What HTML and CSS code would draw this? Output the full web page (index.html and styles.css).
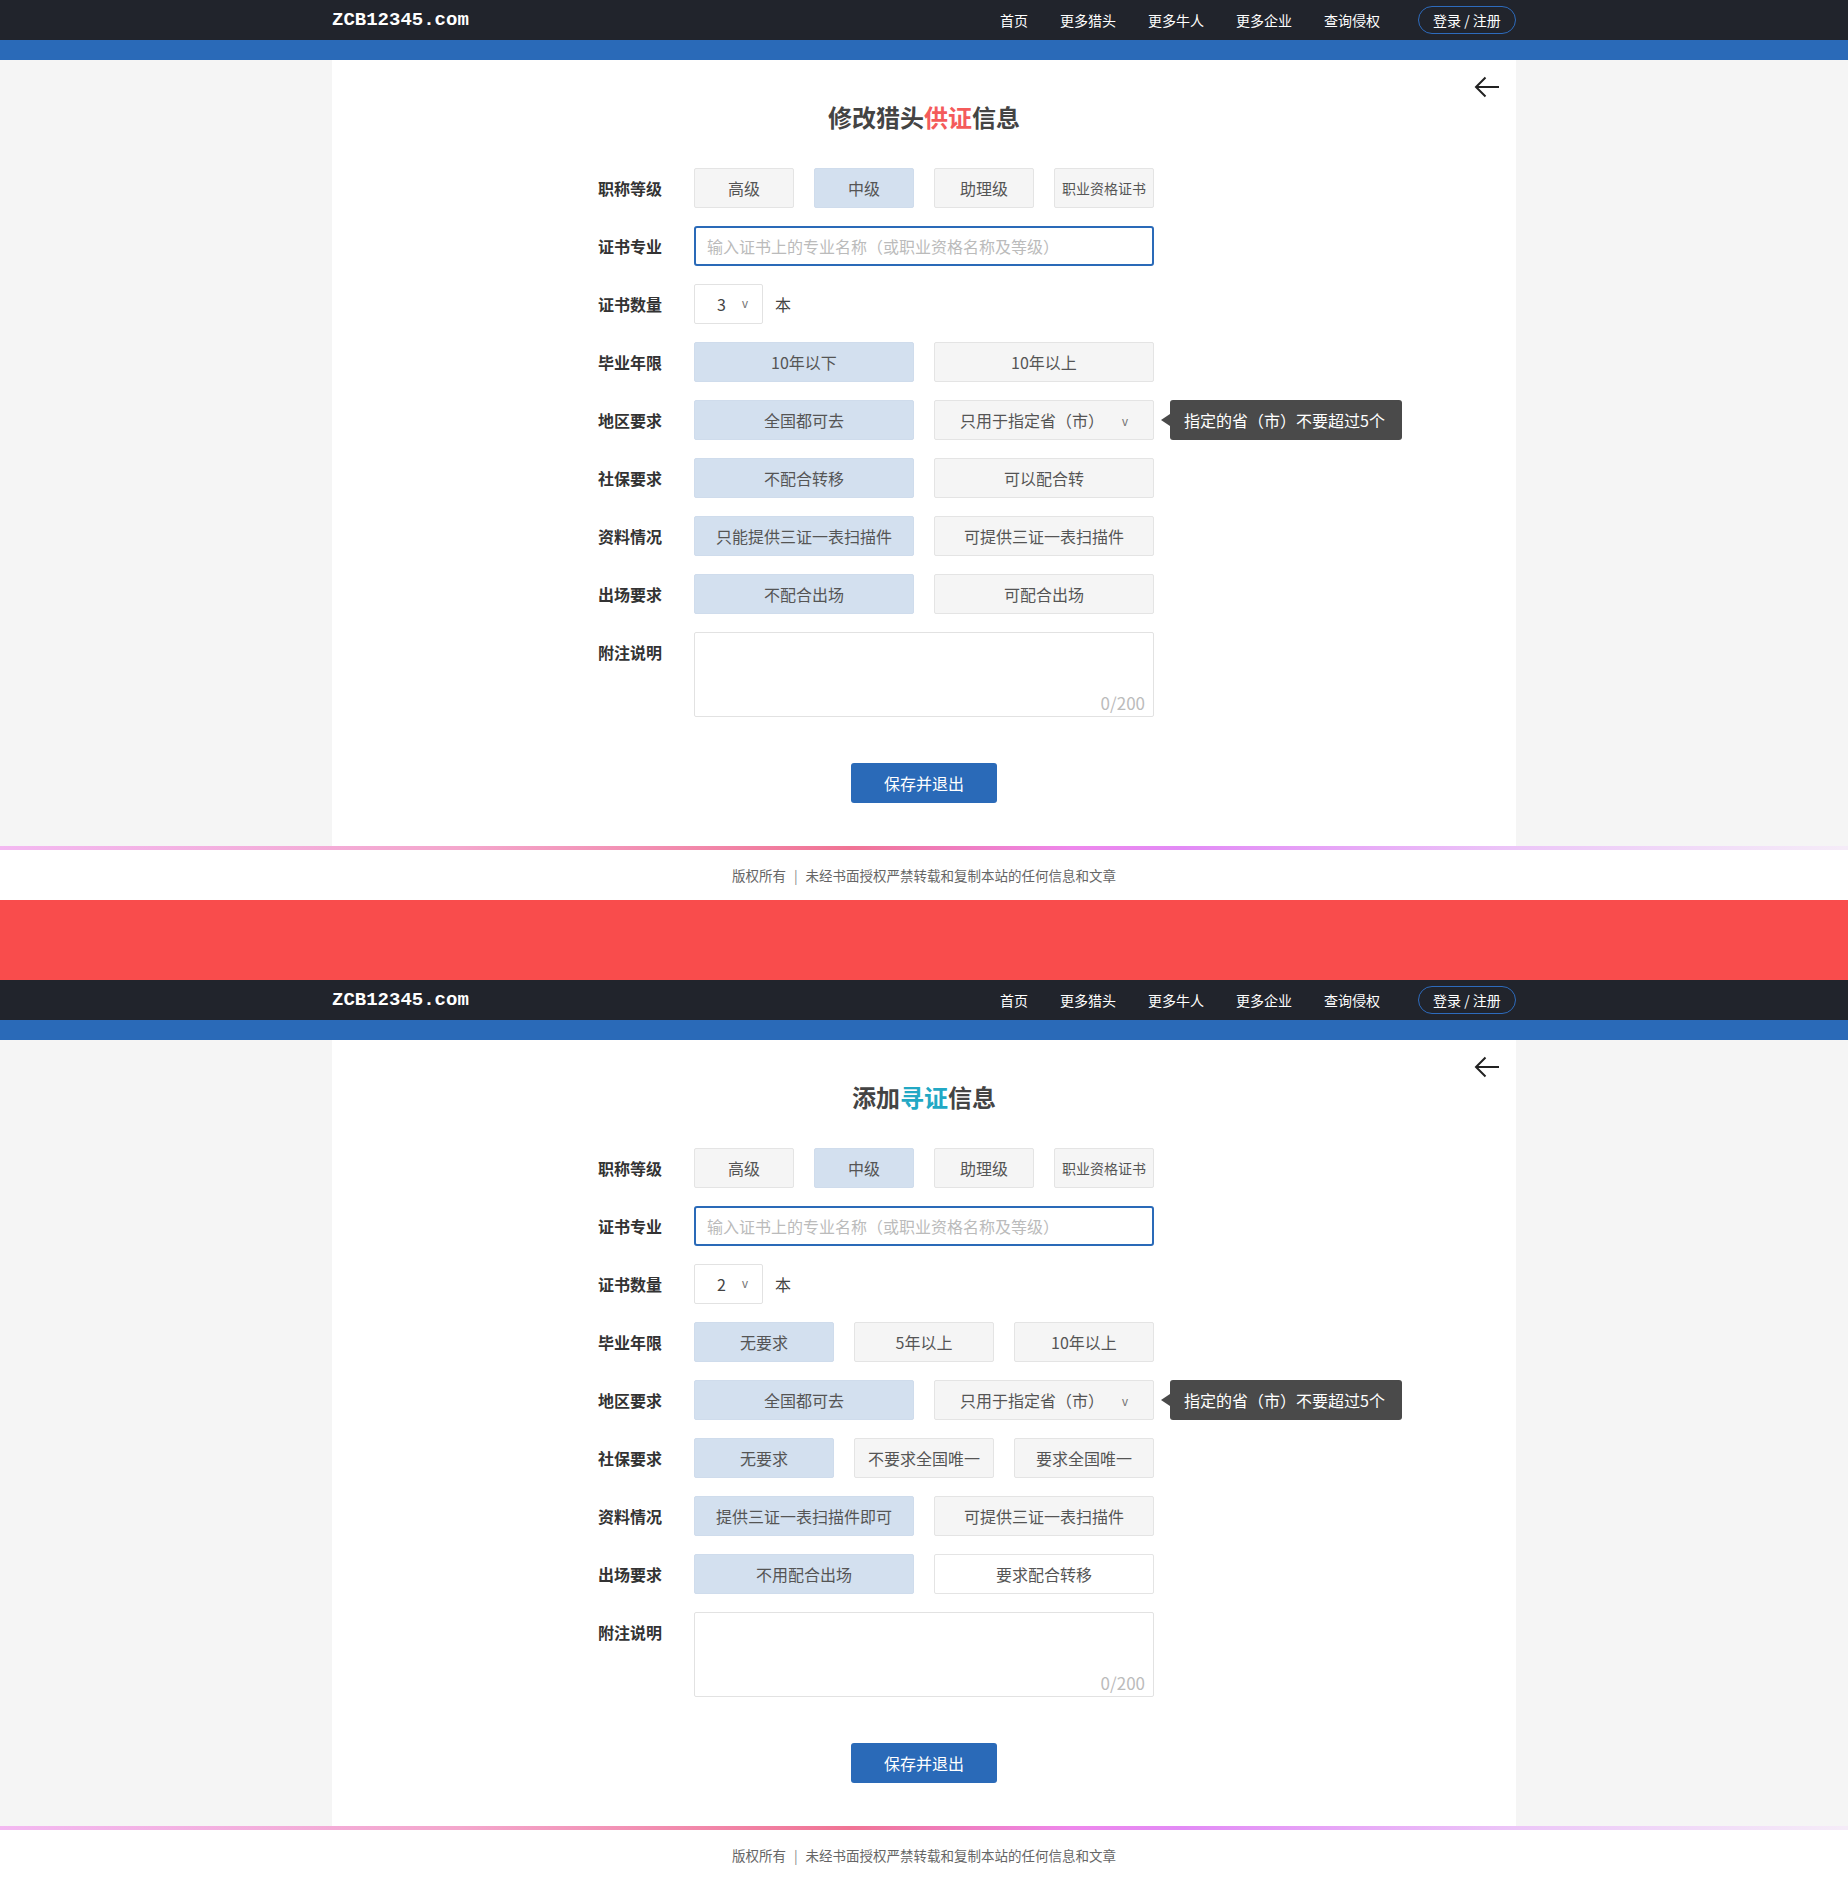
FILE: index.html
```html
<!DOCTYPE html>
<html lang="zh-CN">
<head>
    <meta charset="UTF-8">
    <title>ZCB12345.com - 证书信息</title>
    <link rel="stylesheet" href="styles.css">
</head>
<body>
    <div class="page">
        <header class="topbar">
            <div class="topbar-inner">
                <div class="logo">ZCB12345.com</div>
                <nav class="nav">
                    <a href="#">首页</a>
                    <a href="#">更多猎头</a>
                    <a href="#">更多牛人</a>
                    <a href="#">更多企业</a>
                    <a href="#">查询侵权</a>
                    <a href="#" class="login">登录 / 注册</a>
                </nav>
            </div>
        </header>
        <div class="bluebar"></div>
        <div class="main">
            <div class="container">
                <a href="#" class="back">
                    <svg width="26" height="22" viewBox="0 0 26 22"><path d="M25 11H2M11.5 1.5L2 11l9.5 9.5" fill="none" stroke="#222" stroke-width="2"/></svg>
                </a>
                <h2 class="title">修改猎头<span class="hl-red">供证</span>信息</h2>
                <form class="form" onsubmit="event.preventDefault();">
                    <div class="row">
                        <label>职称等级</label>
                        <div class="field options">
                            <span class="opt">高级</span>
                            <span class="opt active">中级</span>
                            <span class="opt">助理级</span>
                            <span class="opt small">职业资格证书</span>
                        </div>
                    </div>
                    <div class="row">
                        <label>证书专业</label>
                        <div class="field">
                            <input type="text" class="text-input" placeholder="输入证书上的专业名称（或职业资格名称及等级）">
                        </div>
                    </div>
                    <div class="row">
                        <label>证书数量</label>
                        <div class="field inline">
                            <div class="select"><span>3</span><span class="caret">v</span></div>
                            <span class="unit">本</span>
                        </div>
                    </div>
                    <div class="row">
                        <label>毕业年限</label>
                        <div class="field options">
                            <span class="opt active">10年以下</span>
                            <span class="opt">10年以上</span>
                        </div>
                    </div>
                    <div class="row">
                        <label>地区要求</label>
                        <div class="field options">
                            <span class="opt active">全国都可去</span>
                            <span class="opt">只用于指定省（市）<span class="caret">v</span></span>
                            <div class="tip">指定的省（市）不要超过5个</div>
                        </div>
                    </div>
                    <div class="row">
                        <label>社保要求</label>
                        <div class="field options">
                            <span class="opt active">不配合转移</span>
                            <span class="opt">可以配合转</span>
                        </div>
                    </div>
                    <div class="row">
                        <label>资料情况</label>
                        <div class="field options">
                            <span class="opt active">只能提供三证一表扫描件</span>
                            <span class="opt">可提供三证一表扫描件</span>
                        </div>
                    </div>
                    <div class="row">
                        <label>出场要求</label>
                        <div class="field options">
                            <span class="opt active">不配合出场</span>
                            <span class="opt">可配合出场</span>
                        </div>
                    </div>
                    <div class="row">
                        <label>附注说明</label>
                        <div class="field note">
                            <textarea maxlength="200"></textarea>
                            <span class="count">0/200</span>
                        </div>
                    </div>
                    <div class="actions">
                        <button type="submit" class="save">保存并退出</button>
                    </div>
                </form>
            </div>
        </div>
        <div class="line"></div>
        <footer class="footer">版权所有<span class="sep">|</span>未经书面授权严禁转载和复制本站的任何信息和文章</footer>
    </div>

    <div class="divider"></div>

    <div class="page">
        <header class="topbar">
            <div class="topbar-inner">
                <div class="logo">ZCB12345.com</div>
                <nav class="nav">
                    <a href="#">首页</a>
                    <a href="#">更多猎头</a>
                    <a href="#">更多牛人</a>
                    <a href="#">更多企业</a>
                    <a href="#">查询侵权</a>
                    <a href="#" class="login">登录 / 注册</a>
                </nav>
            </div>
        </header>
        <div class="bluebar"></div>
        <div class="main">
            <div class="container">
                <a href="#" class="back">
                    <svg width="26" height="22" viewBox="0 0 26 22"><path d="M25 11H2M11.5 1.5L2 11l9.5 9.5" fill="none" stroke="#222" stroke-width="2"/></svg>
                </a>
                <h2 class="title">添加<span class="hl-teal">寻证</span>信息</h2>
                <form class="form" onsubmit="event.preventDefault();">
                    <div class="row">
                        <label>职称等级</label>
                        <div class="field options">
                            <span class="opt">高级</span>
                            <span class="opt active">中级</span>
                            <span class="opt">助理级</span>
                            <span class="opt small">职业资格证书</span>
                        </div>
                    </div>
                    <div class="row">
                        <label>证书专业</label>
                        <div class="field">
                            <input type="text" class="text-input" placeholder="输入证书上的专业名称（或职业资格名称及等级）">
                        </div>
                    </div>
                    <div class="row">
                        <label>证书数量</label>
                        <div class="field inline">
                            <div class="select"><span>2</span><span class="caret">v</span></div>
                            <span class="unit">本</span>
                        </div>
                    </div>
                    <div class="row">
                        <label>毕业年限</label>
                        <div class="field options">
                            <span class="opt active">无要求</span>
                            <span class="opt">5年以上</span>
                            <span class="opt">10年以上</span>
                        </div>
                    </div>
                    <div class="row">
                        <label>地区要求</label>
                        <div class="field options">
                            <span class="opt active">全国都可去</span>
                            <span class="opt">只用于指定省（市）<span class="caret">v</span></span>
                            <div class="tip">指定的省（市）不要超过5个</div>
                        </div>
                    </div>
                    <div class="row">
                        <label>社保要求</label>
                        <div class="field options">
                            <span class="opt active">无要求</span>
                            <span class="opt">不要求全国唯一</span>
                            <span class="opt">要求全国唯一</span>
                        </div>
                    </div>
                    <div class="row">
                        <label>资料情况</label>
                        <div class="field options">
                            <span class="opt active">提供三证一表扫描件即可</span>
                            <span class="opt">可提供三证一表扫描件</span>
                        </div>
                    </div>
                    <div class="row">
                        <label>出场要求</label>
                        <div class="field options">
                            <span class="opt active">不用配合出场</span>
                            <span class="opt plain">要求配合转移</span>
                        </div>
                    </div>
                    <div class="row">
                        <label>附注说明</label>
                        <div class="field note">
                            <textarea maxlength="200"></textarea>
                            <span class="count">0/200</span>
                        </div>
                    </div>
                    <div class="actions">
                        <button type="submit" class="save">保存并退出</button>
                    </div>
                </form>
            </div>
        </div>
        <div class="line"></div>
        <footer class="footer">版权所有<span class="sep">|</span>未经书面授权严禁转载和复制本站的任何信息和文章</footer>
    </div>
</body>
</html>
```

FILE: styles.css
```css
* { box-sizing: border-box; }
body {
    margin: 0;
    padding: 0;
    font-family: "Noto Sans CJK SC", "Microsoft YaHei", sans-serif;
    color: #333;
    background: #fff;
}
a {
    text-decoration: none;
    color: inherit;
}

/* top bar */
.topbar {
    height: 40px;
    background-color: #21242c;
}
.topbar-inner {
    width: 1184px;
    height: 40px;
    margin: 0 auto;
    display: flex;
    align-items: center;
    justify-content: space-between;
}
.logo {
    font-family: "Liberation Mono", monospace;
    font-weight: bold;
    font-size: 19px;
    color: #fff;
}
.nav {
    display: flex;
    align-items: center;
    gap: 32px;
}
.nav a {
    font-size: 14px;
    color: #fff;
    line-height: 20px;
}
.nav .login {
    margin-left: 6px;
    width: 98px;
    height: 28px;
    line-height: 26px;
    text-align: center;
    border: 1px solid #2d6bbd;
    border-radius: 14px;
}
.bluebar {
    height: 20px;
    background-color: #2a6ab8;
}

/* content */
.main {
    background-color: #f5f5f5;
}
.container {
    position: relative;
    width: 1184px;
    margin: 0 auto;
    background: #fff;
    padding: 40px 0 43px;
}
.back {
    position: absolute;
    top: 16px;
    right: 16px;
    line-height: 0;
}
.title {
    margin: 0;
    text-align: center;
    font-size: 24px;
    line-height: 34px;
    font-weight: bold;
    color: #444;
}
.hl-red { color: #f45b5b; }
.hl-teal { color: #22a8c4; }

.form {
    width: 652px;
    margin: 34px auto 0;
}
.row {
    display: flex;
    align-items: flex-start;
}
.row + .row {
    margin-top: 18px;
}
.row label {
    flex: none;
    width: 96px;
    line-height: 40px;
    font-size: 16px;
    font-weight: bold;
    color: #333;
}
.field {
    position: relative;
    width: 460px;
}
.options {
    display: flex;
    gap: 20px;
}
.opt {
    flex: 1;
    height: 40px;
    line-height: 38px;
    text-align: center;
    font-size: 16px;
    color: #555;
    background-color: #f5f5f5;
    border: 1px solid #e4e4e4;
    border-radius: 2px;
    white-space: nowrap;
    cursor: pointer;
}
.opt.small {
    font-size: 14px;
}
.opt.active {
    background-color: #d3e0ef;
    border-color: #cfdcec;
}
.opt.plain {
    background-color: #fff;
}
.caret {
    display: inline-block;
    margin-left: 18px;
    font-family: "Liberation Sans", sans-serif;
    font-size: 12px;
    color: #777;
    vertical-align: 1px;
}
.tip {
    position: absolute;
    left: 476px;
    top: 0;
    height: 40px;
    line-height: 40px;
    padding: 0 17px 0 14px;
    white-space: nowrap;
    font-size: 16px;
    color: #fff;
    background-color: #4a4a4a;
    border-radius: 3px;
}
.tip::before {
    content: "";
    position: absolute;
    left: -9px;
    top: 14px;
    border-style: solid;
    border-width: 6px 9px 6px 0;
    border-color: transparent #4a4a4a transparent transparent;
}

.text-input {
    display: block;
    width: 460px;
    height: 40px;
    padding: 0 11px;
    border: 2px solid #2a6ab8;
    border-radius: 3px;
    font-family: inherit;
    font-size: 16px;
    color: #333;
    outline: none;
}
.text-input::placeholder {
    color: #bbb;
}

.inline {
    display: flex;
    align-items: center;
}
.select {
    display: flex;
    align-items: center;
    width: 69px;
    height: 40px;
    padding-left: 22px;
    border: 1px solid #e2e2e2;
    border-radius: 2px;
    font-size: 16px;
    color: #444;
}
.select .caret {
    margin-left: 16px;
    vertical-align: 0;
}
.unit {
    margin-left: 12px;
    font-size: 16px;
    color: #444;
}

.note textarea {
    display: block;
    width: 460px;
    height: 85px;
    resize: none;
    border: 1px solid #e2e2e2;
    border-radius: 2px;
    padding: 8px 10px;
    font-family: inherit;
    font-size: 14px;
    outline: none;
}
.count {
    position: absolute;
    right: 9px;
    bottom: 2px;
    font-size: 17px;
    color: #bbb;
}

.actions {
    margin-top: 46px;
    display: flex;
    justify-content: center;
}
.save {
    width: 146px;
    height: 40px;
    border: none;
    border-radius: 3px;
    background-color: #2a6ab8;
    color: #fff;
    font-family: inherit;
    font-size: 16px;
    cursor: pointer;
}

/* footer */
.line {
    height: 4px;
    background: linear-gradient(to right, #f3b8f1 0%, #f4a6cc 25%, #f07394 46%, #ee86ec 58%, #e28af6 64%, #ecc6f8 82%, #f5ecf8 100%);
}
.footer {
    height: 50px;
    line-height: 50px;
    text-align: center;
    font-size: 13.5px;
    color: #666;
    background: #fff;
}
.footer .sep {
    margin: 0 8px;
    color: #888;
}
.divider {
    height: 80px;
    background-color: #f94c4c;
}
```
